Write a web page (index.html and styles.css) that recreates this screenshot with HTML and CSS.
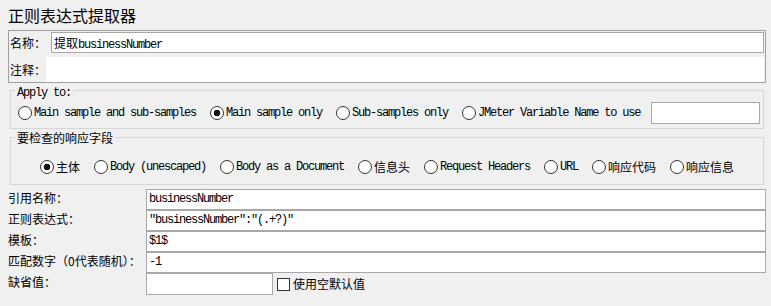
FILE: index.html
```html
<!DOCTYPE html>
<html>
<head lang="zh">
    <meta charset="UTF-8">
    <title>正则表达式提取器</title>
    <link rel="stylesheet" href="styles.css">
</head>
<body>
<div class="title">正则表达式提取器</div>

<div class="namebox">
    <div class="name-row">
        <span class="lbl">名称：</span>
        <div class="field name-field">提取<span class="m">businessNumber</span></div>
    </div>
    <div class="comment-row">
        <span class="lbl lbl-c">注释：</span>
        <div class="area"></div>
    </div>
</div>

<fieldset class="group apply">
    <legend class="m">Apply to:</legend>
    <div class="opts">
        <span class="opt"><i class="radio"></i><span class="m">Main sample and sub-samples</span></span>
        <span class="opt"><i class="radio on"></i><span class="m">Main sample only</span></span>
        <span class="opt"><i class="radio"></i><span class="m">Sub-samples only</span></span>
        <span class="opt"><i class="radio"></i><span class="m">JMeter Variable Name to use</span></span>
        <div class="field var-field"></div>
    </div>
</fieldset>

<fieldset class="group check">
    <legend>要检查的响应字段</legend>
    <div class="opts center">
        <span class="opt"><i class="radio on"></i>主体</span>
        <span class="opt"><i class="radio"></i><span class="m">Body (unescaped)</span></span>
        <span class="opt"><i class="radio"></i><span class="m">Body as a Document</span></span>
        <span class="opt"><i class="radio"></i>信息头</span>
        <span class="opt"><i class="radio"></i><span class="m">Request Headers</span></span>
        <span class="opt"><i class="radio"></i><span class="m">URL</span></span>
        <span class="opt"><i class="radio"></i>响应代码</span>
        <span class="opt"><i class="radio"></i>响应信息</span>
    </div>
</fieldset>

<div class="props">
    <span class="plbl">引用名称：</span>
    <div class="field m">businessNumber</div>
    <span class="plbl">正则表达式：</span>
    <div class="field m">"businessNumber":"(.+?)"</div>
    <span class="plbl">模板：</span>
    <div class="field m">$1$</div>
    <span class="plbl">匹配数字（0代表随机）：</span>
    <div class="field m">-1</div>
    <span class="plbl">缺省值：</span>
    <div class="default-row">
        <div class="field short"></div>
        <i class="checkbox"></i>
        <span>使用空默认值</span>
    </div>
</div>
</body>
</html>
```

FILE: styles.css
```css
*{margin: 0;padding: 0;box-sizing: border-box;}
body{width: 771px;height: 306px;overflow: hidden;background: #f0f0f0;color: #000;font: 12px/16px "Noto Sans CJK SC", sans-serif;}
.m{font-family: "Liberation Mono", "Noto Sans CJK SC", monospace;font-size: 12px;letter-spacing: -1.2px;}

.title{height: 30px;padding: 6px 0 0 8px;font-size: 16px;line-height: 18px;}

.namebox{height: 53px;margin: 0 5px 0 8px;padding: 1px 1px 0 1px;border: 1px solid #a0a0a0;}
.name-row{display: flex;align-items: center;height: 21px;}
.lbl{width: 41px;}
.lbl-c{width: 36px;}
.field{height: 21px;border: 1px solid #a8a8a8;background: #fff;padding-left: 2px;line-height: 19px;white-space: nowrap;overflow: hidden;}
.name-field{flex: 1;}
.comment-row{display: flex;align-items: center;height: 25px;margin-top: 4px;}
.area{flex: 1;height: 25px;background: #fff;}

.group{margin: 0 7px 0 10px;border: 1px solid #d6d6d6;}
.group legend{margin-left: -3px;padding: 0 2px;line-height: 16px;}
.apply{margin-top: -3px;padding: 1px 3px 4px 7px;}
.apply legend{padding-top: 5px;}
.check{margin-top: -1px;padding: 12px 5px 8px 5px;}
.check legend{margin-left: -1px;padding-top: 2px;}
.opts{display: flex;align-items: center;gap: 14px;height: 22px;}
.check .opts{height: 18px;}
.center{justify-content: center;}
.opt{display: flex;align-items: center;white-space: nowrap;}
.radio{width: 14px;height: 14px;margin-right: 2px;border: 1px solid #333;border-radius: 50%;background: #fff;}
.radio.on{background: radial-gradient(circle, #111 0 3px, #fff 3.6px);}
.var-field{width: 109px;height: 22px;margin-left: -3px;}

.props{display: grid;grid-template-columns: 138px 1fr;grid-template-rows: 21px 21px 21px 21px 22px;margin: 4px 5px 0 8px;}
.plbl{line-height: 17px;white-space: nowrap;}
.props .field{height: 21px;}
.default-row{display: flex;align-items: center;}
.props .short{width: 127px;height: 22px;}
.checkbox{width: 13px;height: 13px;margin: 0 3px 0 4px;border: 1px solid #333;background: #fff;}
```
